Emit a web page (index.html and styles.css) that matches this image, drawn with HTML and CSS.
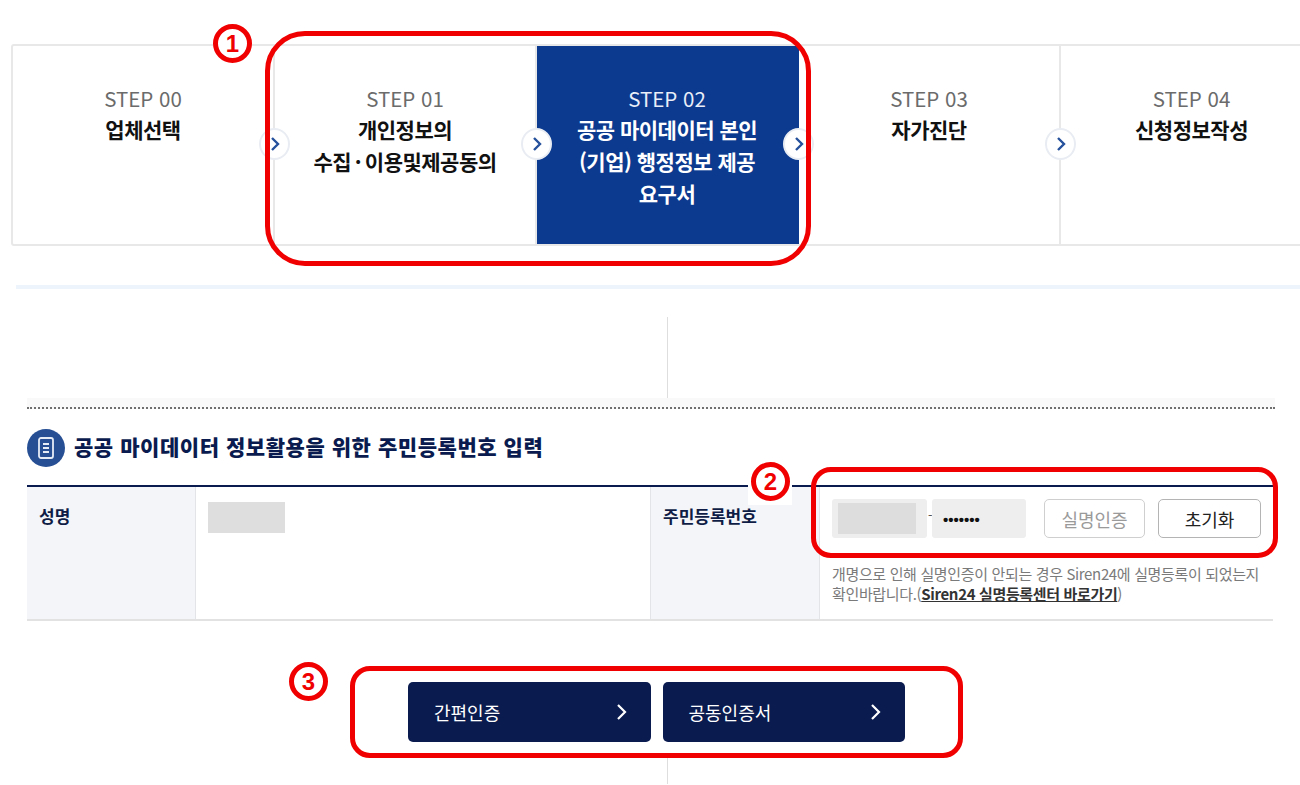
FILE: index.html
```html
<!DOCTYPE html>
<html lang="ko">
<head>
<meta charset="utf-8">
<title>공공 마이데이터 본인 인증</title>
<link rel="stylesheet" href="styles.css">
</head>
<body>
<div class="page">
  <ol class="steps">
    <li class="step"><span class="step-no">STEP 00</span><strong class="step-name">업체선택</strong><i class="arrow"><svg viewBox="0 0 12 16"><path d="M3 2l6 6-6 6"/></svg></i></li>
    <li class="step"><span class="step-no">STEP 01</span><strong class="step-name">개인정보의<br>수집&#8201;·&#8201;이용및제공동의</strong><i class="arrow"><svg viewBox="0 0 12 16"><path d="M3 2l6 6-6 6"/></svg></i></li>
    <li class="step active"><span class="step-no">STEP 02</span><strong class="step-name">공공 마이데이터 본인<br>(기업) 행정정보 제공<br>요구서</strong><i class="arrow"><svg viewBox="0 0 12 16"><path d="M3 2l6 6-6 6"/></svg></i></li>
    <li class="step"><span class="step-no">STEP 03</span><strong class="step-name">자가진단</strong><i class="arrow"><svg viewBox="0 0 12 16"><path d="M3 2l6 6-6 6"/></svg></i></li>
    <li class="step last"><span class="step-no">STEP 04</span><strong class="step-name">신청정보작성</strong></li>
  </ol>

  <div class="blue-rule"></div>
  <div class="v-rule top"></div>
  <div class="dotted"></div>

  <h2 class="section-title">
    <span class="title-icon"><svg viewBox="0 0 20 24"><rect x="3" y="2" width="14" height="20" rx="2"/><path d="M7 8h6M7 12h6M7 16h6"/></svg></span>
    <span class="title-text">공공 마이데이터 정보활용을 위한 주민등록번호 입력</span>
  </h2>

  <div class="form-table">
    <div class="th th-name">성명</div>
    <div class="td td-name"><div class="masked-name"></div></div>
    <div class="th th-rrn">주민등록번호</div>
    <div class="td td-rrn">
      <div class="rrn-row">
        <div class="rrn-field"><span class="rrn-mask"></span></div>
        <span class="dash">-</span>
        <div class="rrn-field second">•••••••</div>
        <button class="btn verify">실명인증</button>
        <button class="btn reset">초기화</button>
      </div>
      <p class="note">개명으로 인해 실명인증이 안되는 경우 Siren24에 실명등록이 되었는지<br>확인바랍니다.(<a href="#">Siren24 실명등록센터 바로가기</a>)</p>
    </div>
  </div>

  <div class="actions">
    <a class="cta" href="#">간편인증<svg viewBox="0 0 12 18"><path d="M2 2l7 7-7 7"/></svg></a>
    <a class="cta" href="#">공동인증서<svg viewBox="0 0 12 18"><path d="M2 2l7 7-7 7"/></svg></a>
  </div>
  <div class="v-rule bottom"></div>

  <div class="mark box-1"></div>
  <div class="mark box-2"></div>
  <div class="mark box-3"></div>
  <div class="num-bg"></div>
  <span class="num num-1">1</span>
  <span class="num num-2">2</span>
  <span class="num num-3">3</span>
</div>
</body>
</html>
```
FILE: styles.css
```css
* { box-sizing: border-box; }
html, body { margin: 0; padding: 0; background: #fff; }
body { font-family: "Noto Sans CJK KR", "Noto Sans", sans-serif; color: #111; }
.page { position: relative; width: 1300px; height: 785px; overflow: hidden; padding-top: 44px; }

.steps { display: flex; list-style: none; margin: 0 0 0 11px; padding: 0; width: 1320px; height: 202px; border: 2px solid #e8e8e8; border-radius: 3px; }
.step { position: relative; width: 262px; flex: none; padding-top: 36px; text-align: center; border-right: 2px solid #e8e8e8; }
.step.active { background: #0c3a8f; color: #fff; border-right-color: #0c3a8f; }
.step.last { border-right: 0; width: 261px; }
.step-no { display: block; font-size: 20.5px; line-height: 32px; color: #6b6b6b; }
.active .step-no { color: #e9eef8; }
.step-name { display: block; margin-top: -1px; font-size: 21px; line-height: 32px; font-weight: 700; letter-spacing: -0.5px; }
.arrow { position: absolute; right: -17px; top: 82px; z-index: 2; width: 31px; height: 32px; background: #fff; border: 2px solid #e9edf3; border-radius: 50%; display: flex; align-items: center; justify-content: center; }
.arrow svg { width: 12px; height: 16px; fill: none; stroke: #24509c; stroke-width: 2.4; }

.blue-rule { height: 4px; margin: 39px 0 0 16px; background: #eef4fc; }
.v-rule { width: 1px; margin-left: 667px; background: #dedede; }
.v-rule.top { height: 81px; margin-top: 28px; }
.v-rule.bottom { height: 27px; margin-top: 15px; }
.dotted { height: 11px; margin-left: 27px; width: 1248px; background: #f9f9f9; border-bottom: 2px dotted #6f6f6f; }

.section-title { display: flex; align-items: center; gap: 9px; margin: 18px 0 0 27px; height: 41px; font-size: 21px; font-weight: 900; color: #0a1b4f; letter-spacing: 0.55px; }
.title-icon { width: 38px; height: 38px; border-radius: 50%; background: #264f94; display: flex; align-items: center; justify-content: center; }
.title-icon svg { width: 20px; height: 24px; fill: none; stroke: #e6ecf6; stroke-width: 1.8; }
.title-text { margin-top: -4px; }

.form-table { display: grid; grid-template-columns: 169px 454px 170px 453px; margin: 17px 0 0 27px; width: 1246px; height: 136px; border-top: 2px solid #0a1b4f; border-bottom: 2px solid #e2e2e2; }
.th { background: #f3f5f9; border-right: 1px solid #e2e4e8; padding: 17px 12px; font-size: 17px; line-height: 24px; font-weight: 700; color: #0f1c45; }
.th-rrn { border-left: 1px solid #e2e4e8; }
.td { padding: 12px; }
.masked-name { width: 77px; height: 31px; margin-top: 3px; background: #dedede; }
.rrn-row { display: flex; align-items: center; height: 39px; }
.rrn-field { width: 95px; height: 39px; background: #eeeeee; border-radius: 3px; padding: 4px 10px 4px 6px; }
.rrn-mask { display: block; width: 78px; height: 31px; background: #dddddd; }
.dash { width: 5px; margin-left: 1px; padding-bottom: 8px; font-size: 13px; color: #555; line-height: 1; }
.rrn-field.second { padding: 0 0 0 11px; margin-left: -1px; width: 94px; font-size: 15px; line-height: 41px; color: #111; font-family: "Liberation Sans", sans-serif; font-weight: 700; }
.btn { height: 39px; background: #fff; border-radius: 5px; font-family: inherit; font-size: 18px; padding: 0; }
.verify { width: 101px; margin-left: 18px; border: 1.5px solid #cfcfcf; color: #9a9a9a; }
.reset { width: 103px; margin-left: 13px; border: 1.5px solid #b4b4b4; color: #222; }
.note { margin: 26px 0 0; font-size: 15px; line-height: 20px; color: #7a7a7a; letter-spacing: -0.35px; }
.note a { color: #333; font-weight: 700; }

.actions { display: flex; gap: 12px; margin: 61px 0 0 408px; }
.cta { display: flex; align-items: center; justify-content: space-between; width: 242.5px; height: 60px; padding: 0 23px 0 26px; background: #0a1b4f; border-radius: 5px; color: #fff; font-size: 18px; text-decoration: none; }
.cta svg { width: 12px; height: 18px; fill: none; stroke: #fff; stroke-width: 2.2; }

.mark { position: absolute; border: 5px solid #f00000; z-index: 3; }
.box-1 { left: 265px; top: 31px; width: 546px; height: 235px; border-radius: 40px; }
.box-2 { left: 811px; top: 467px; width: 467px; height: 91px; border-radius: 20px; }
.box-3 { left: 350px; top: 666px; width: 613px; height: 92px; border-radius: 20px; }
.num-bg { position: absolute; left: 748px; top: 458px; width: 44px; height: 47px; background: #fff; z-index: 3; }
.num { position: absolute; z-index: 4; width: 39px; height: 39px; border: 5px solid #f00000; border-radius: 50%; background: #fff; color: #f00000; font: 700 24px/29px "Liberation Sans", sans-serif; text-align: center; }
.num-1 { left: 213px; top: 24px; }
.num-2 { left: 751px; top: 462px; }
.num-3 { left: 289px; top: 662px; }
```
